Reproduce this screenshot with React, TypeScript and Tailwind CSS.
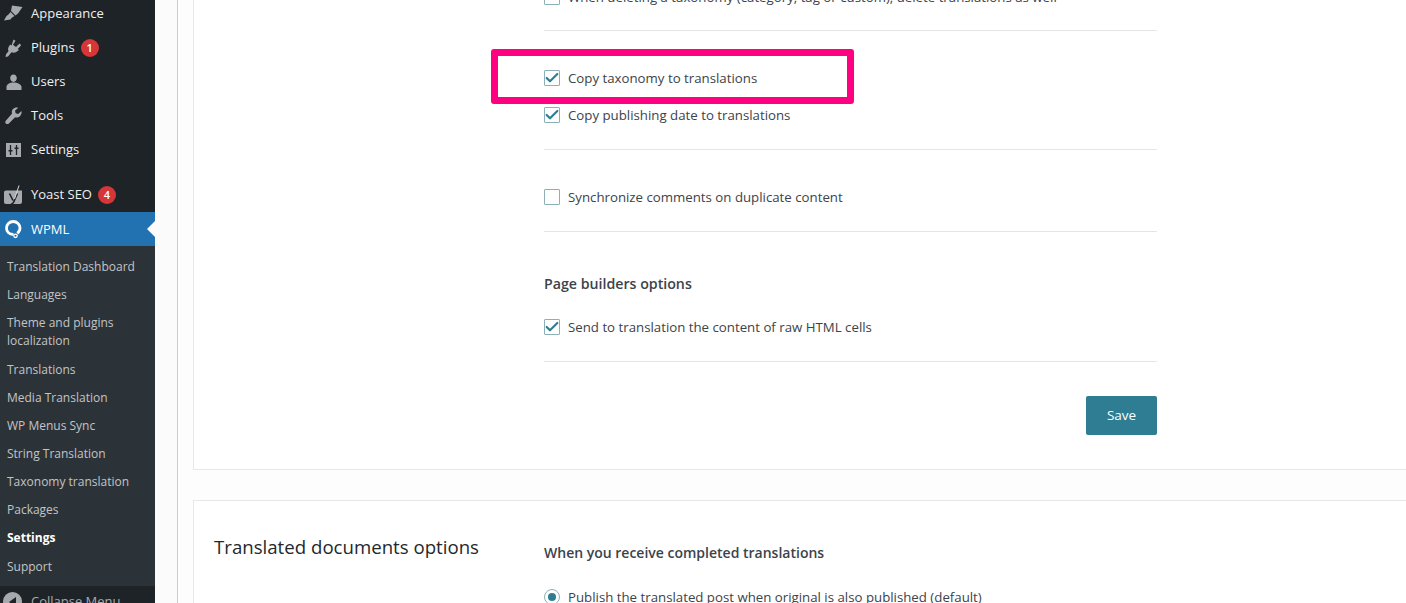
import { Check } from 'lucide-react'

const font = "font-['Open_Sans','Noto_Sans',sans-serif]"

const BrushIcon = () => (
  <svg viewBox="0 0 20 20" className="w-5 h-5 fill-[#a7aaad]">
    <path d="M9 1.500l10.500 1.500-4.500 6.500-2.500 2-4.500-4.500zM7.500 8l4 4-3 2-1 1.500-6.500 1 2.500-4.500 2-1.500z" />
  </svg>
)
const PluginIcon = () => (
  <svg viewBox="0 0 20 20" className="w-5 h-5 fill-[#a7aaad]">
    <path d="M10.500 1.500l2 1.200-2.500 4 3 2.300 3.500-3.500 1.700 1.700-3.500 3.700 1.300 1-1 .8c-2 2-4.500 2.500-6.500 1.500L5 18.500l-2.500.5.500-2.700 2.500-3c-.8-2-.5-4 1-5.800l.7-1 1.300 1z" />
  </svg>
)
const UsersIcon = () => (
  <svg viewBox="0 0 20 20" className="w-5 h-5 fill-[#a7aaad]">
    <path d="M10.500 10c2 0 3.300-1.900 3.300-3.900S12.500 2.500 10.500 2.500 7.200 4 7.200 6.100 8.500 10 10.500 10zM10.500 10.500c-4 0-7 1.900-7 4.500v3h15v-3c0-2.600-4-4.500-8-4.500z" />
  </svg>
)
const ToolsIcon = () => (
  <svg viewBox="0 0 20 20" className="w-5 h-5 fill-[#a7aaad]">
    <path d="M18.500 5l-3.300 3-2.500-.8-.7-2.500 3.200-3c-2-.7-4 0-5.200 1.200-1.200 1.300-1.500 3-.9 4.600L3 14.500c-1 .9-1 2.200-.2 3s2.300.8 3.100 0l6.200-6.300c1.500.6 3.300.3 4.600-.8 1.400-1.200 2.300-3.200 1.800-5.400z" />
  </svg>
)
const SettingsIcon = () => (
  <svg viewBox="0 0 20 20" className="w-5 h-5">
    <path className="fill-[#a7aaad]" d="M3 3h15v14H3z" />
    <path className="stroke-[#1d2327]" strokeWidth="1.300" d="M7.500 5v10M13.500 5v10" fill="none" />
    <path className="fill-[#1d2327]" d="M5.500 10h4v1.500h-4zM11.500 7.500h4V9h-4z" />
  </svg>
)
const YoastIcon = () => (
  <svg viewBox="0 0 20 20" className="w-5 h-5">
    <path className="fill-[#a7aaad]" d="M3 5.500C1.800 5.500 1 6.300 1 7.500V17c0 1 .8 2 2 2h14c1 0 2-1 2-2V5.500z" />
    <path className="stroke-[#1d2327]" strokeWidth="1.600" fill="none" d="M6.500 8.500L10 15.500M14.500 8.500l-4 9-2.500 2" />
    <path className="stroke-[#d8dadc]" strokeWidth="1" fill="none" d="M16 .5L11.500 14" />
  </svg>
)
const WpmlIcon = () => (
  <svg viewBox="0 0 20 20" className="w-5 h-5">
    <path fill="none" stroke="#fff" strokeWidth="2.800" d="M10.500 15.500C6 15.500 3.500 12.500 3.500 9s2.800-6.500 6.700-6.500S17 5.500 17 9c0 2.300-1 4-2.700 5.300" />
    <circle cx="12.500" cy="16.800" r="1.700" fill="none" stroke="#fff" strokeWidth="1.300" />
  </svg>
)

const Badge = ({ n }: { n: number }) => (
  <span className="ml-[6px] w-[18px] h-[18px] rounded-full bg-[#d63638] text-white text-[11px] font-semibold flex items-center justify-center">
    {n}
  </span>
)

const mainMenu = [
  { label: 'Appearance', icon: <BrushIcon /> },
  { label: 'Plugins', icon: <PluginIcon />, badge: 1 },
  { label: 'Users', icon: <UsersIcon /> },
  { label: 'Tools', icon: <ToolsIcon /> },
  { label: 'Settings', icon: <SettingsIcon /> },
]

const subMenu = [
  'Translation Dashboard',
  'Languages',
  'Theme and plugins localization',
  'Translations',
  'Media Translation',
  'WP Menus Sync',
  'String Translation',
  'Taxonomy translation',
  'Packages',
  'Settings',
  'Support',
]

function MenuRow({ icon, label, badge }: { icon: React.ReactNode; label: string; badge?: number }) {
  return (
    <div className="h-[34px] flex items-center text-[13px] text-[#f0f0f1]">
      <span className="w-[31px] pl-[3px] flex items-center shrink-0">{icon}</span>
      <span>{label}</span>
      {badge ? <Badge n={badge} /> : null}
    </div>
  )
}

function Box({ checked }: { checked?: boolean }) {
  return (
    <span className="w-4 h-4 shrink-0 border border-[#8cb0b8] rounded-[1px] bg-white flex items-center justify-center">
      {checked ? <Check className="w-[16px] h-[16px] shrink-0 text-[#2e7d92]" strokeWidth={3.2} /> : null}
    </span>
  )
}

function Option({ label, checked, className }: { label: string; checked?: boolean; className?: string }) {
  return (
    <div className={`flex items-center gap-2 text-[13.250px] leading-5 text-[#3c434a] ${className ?? ''}`}>
      <Box checked={checked} />
      <span>{label}</span>
    </div>
  )
}

const Divider = ({ className }: { className?: string }) => (
  <div className={`h-px bg-[#e5e5e5] w-[613px] ${className ?? ''}`} />
)

export default function App() {
  return (
    <div className={`${font} relative flex h-[603px] w-[1406px] overflow-hidden bg-white`}>
      {/* 左侧菜单 */}
      <aside className="w-[155px] shrink-0 h-[603px] overflow-hidden bg-[#1d2327]">
        <div className="-mt-[3px]">
          {mainMenu.map((m) => (
            <MenuRow key={m.label} {...m} />
          ))}
        </div>
        <div className="mt-[11px]">
          <MenuRow icon={<YoastIcon />} label="Yoast SEO" badge={4} />
        </div>
        <div className="relative h-[34px] bg-[#2271b1] flex items-center text-[13px] text-white">
          <span className="w-[31px] pl-[3px] flex items-center shrink-0"><WpmlIcon /></span>
          <span className="pt-[1px]">WPML</span>
          <span className="absolute right-0 top-[9px] border-y-[8px] border-y-transparent border-r-[8px] border-r-[#fbfbfb]" />
        </div>
        <div className="bg-[#2c3338] pt-[7px] h-[340px] text-[12px] leading-[18px] text-[#c3c4c7]">
          {subMenu.map((s) => (
            <div key={s} className={`px-[7px] py-[5.080px] ${s === 'Settings' ? 'font-bold text-white' : ''}`}>
              {s}
            </div>
          ))}
        </div>
        <div className="flex items-center text-[13px] text-[#a7aaad] pt-[6px] pl-[3px] gap-[9px]">
          <span className="w-[19px] h-[19px] rounded-full bg-[#a7aaad] flex items-center justify-center shrink-0">
            <span className="border-y-[5px] border-y-transparent border-r-[7px] border-r-[#1d2327]" />
          </span>
          <span>Collapse Menu</span>
        </div>
      </aside>

      {/* 内容区 */}
      <main className="w-[1251px] shrink-0 flex">
        <div className="w-[22px] shrink-0 border-r border-[#cccccc] box-content bg-[#fbfbfb]" />
        <div className="flex-1 bg-[#fdfdfd] pl-[15px]">
          <div className="h-[470px] bg-white border-l border-b border-[#e8e8e8] pl-[350px] overflow-hidden">
            <Option label="When deleting a taxonomy (category, tag or custom), delete translations as well" className="-mt-[13px]" />
            <Divider className="mt-[23px]" />
            <Option label="Copy taxonomy to translations" checked className="mt-[37px]" />
            <Option label="Copy publishing date to translations" checked className="mt-[17px]" />
            <Divider className="mt-[24px]" />
            <Option label="Synchronize comments on duplicate content" className="mt-[37px]" />
            <Divider className="mt-[24px]" />
            <div className="mt-[42px] text-[14.200px] leading-5 font-semibold text-[#3c434a]">Page builders options</div>
            <Option label="Send to translation the content of raw HTML cells" checked className="mt-[23px]" />
            <Divider className="mt-[24px]" />
            <div className="w-[613px] flex justify-end mt-[34px]">
              <button className="w-[71px] h-[39px] bg-[#2e7d92] text-white text-[13.500px] rounded-[2px]">Save</button>
            </div>
          </div>
          <div className="mt-[30px] h-[110px] bg-white border-l border-t border-[#e8e8e8] flex">
            <div className="w-[350px] pl-[20px] pt-[32px] text-[18.650px] leading-7 text-[#23282d]">
              Translated documents options
            </div>
            <div className="pt-[42px]">
              <div className="text-[14px] leading-5 font-semibold text-[#3c434a]">When you receive completed translations</div>
              <div className="mt-[24px] flex items-center gap-2 text-[13.250px] leading-5 text-[#3c434a]">
                <span className="w-4 h-4 rounded-full border border-[#8cb0b8] flex items-center justify-center">
                  <span className="w-2 h-2 rounded-full bg-[#2e7d92]" />
                </span>
                <span>Publish the translated post when original is also published (default)</span>
              </div>
            </div>
          </div>
        </div>
      </main>

      {/* 粉色标注框 */}
      <div className="absolute left-[491px] top-[49px] w-[363px] h-[55px] border-[7px] border-[#ff0080] rounded-[3px]" />
    </div>
  )
}
